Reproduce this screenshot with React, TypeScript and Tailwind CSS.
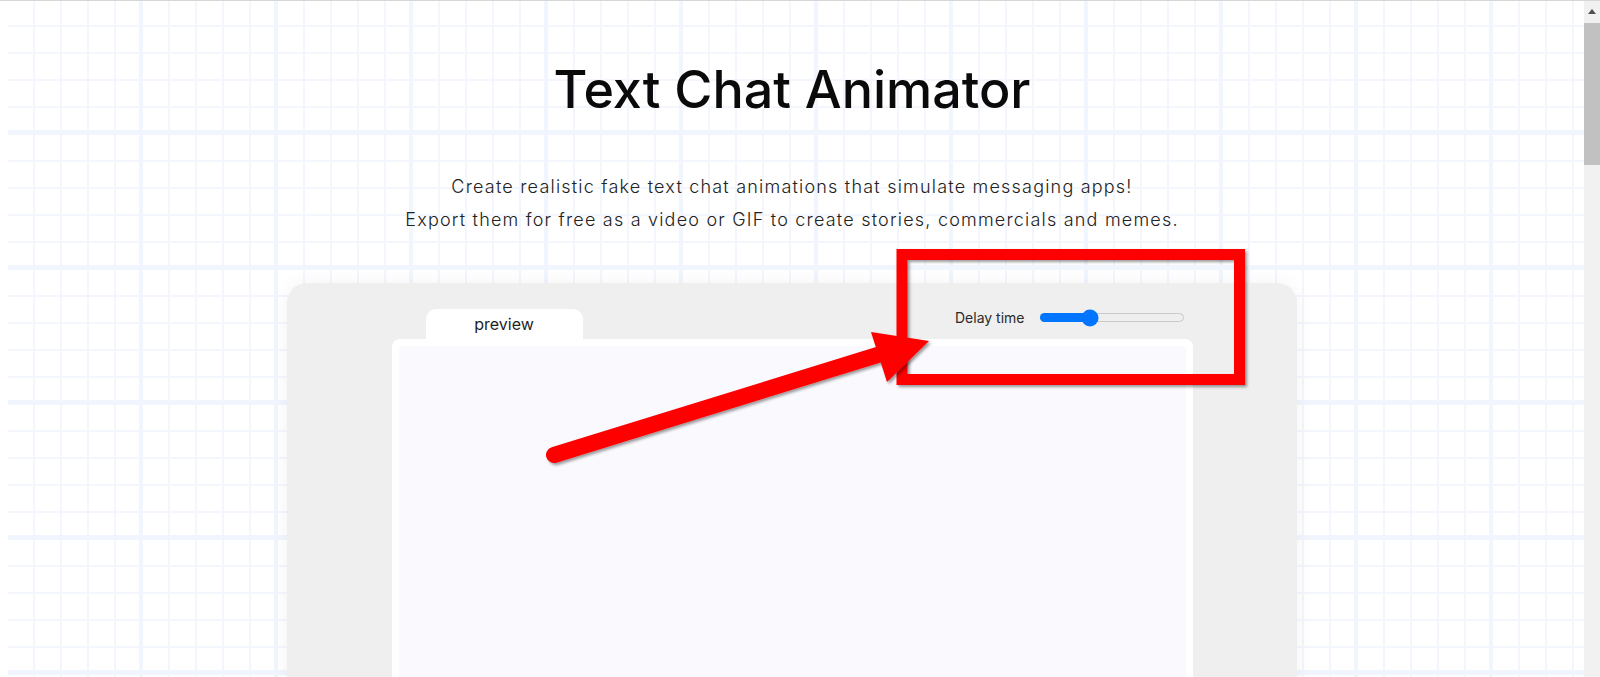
import { useState } from "react";

function DelaySlider() {
  const [value] = useState(35);
  return (
    <div className="flex h-[17px] items-center gap-[15px]">
      <span className="font-['Inter','Liberation_Sans',sans-serif] text-[14px] leading-none text-[#2a2a2a]">
        Delay time
      </span>
      <div className="relative h-[9px] w-[144px] rounded-full border border-[#c9c9c9] bg-[#efefef]">
        <div
          className="absolute -left-px -top-px h-[9px] rounded-full bg-[#0075ff]"
          style={{ width: `${value}%` }}
        />
        <div
          className="absolute top-1/2 h-[17px] w-[17px] -translate-x-1/2 -translate-y-1/2 rounded-full bg-[#0075ff]"
          style={{ left: `${value}%` }}
        />
      </div>
    </div>
  );
}

function Annotation() {
  return (
    <svg
      className="pointer-events-none absolute left-0 top-0"
      width="1600"
      height="677"
      viewBox="0 0 1600 677"
    >
      <defs>
        <filter id="shade" x="-10%" y="-10%" width="130%" height="130%">
          <feDropShadow dx="2" dy="2" stdDeviation="1.5" floodColor="#000" floodOpacity="0.4" />
        </filter>
      </defs>
      <rect
        x="902"
        y="253.5"
        width="337.5"
        height="125"
        fill="none"
        stroke="#ff0000"
        strokeWidth="11"
        filter="url(#shade)"
      />
      <g filter="url(#shade)">
        <line x1="554" y1="454" x2="884" y2="352" stroke="#ff0000" strokeWidth="16" strokeLinecap="round" />
        <polygon points="871,331 929,340 887,381" fill="#ff0000" />
      </g>
    </svg>
  );
}

export default function App() {
  return (
    <div className="relative flex h-[677px] w-full overflow-hidden border-t border-[#d6d6d6] bg-white">
      <main className="relative min-w-0 flex-1 overflow-hidden bg-[image:linear-gradient(to_right,#fff_8px,transparent_8px),linear-gradient(to_right,transparent_131px,#f1f5fd_131px,#f1f5fd_135px),linear-gradient(to_bottom,transparent_130px,#f1f5fd_130px,#f1f5fd_135px),linear-gradient(to_right,transparent_25px,#f3f6fd_25px,#f3f6fd_27px),linear-gradient(to_bottom,transparent_25px,#f3f6fd_25px,#f3f6fd_27px)] bg-[size:100%_100%,135px_100%,100%_135px,27px_100%,100%_27px] bg-[position:0_0,8px_0,0_-1px,8px_0,0_-1px]">
        <h1 className="pt-[63px] text-center font-['Inter','Liberation_Sans',sans-serif] text-[52px] font-medium leading-[52px] tracking-[0px] text-[#0a0a0a]">
          Text Chat Animator
        </h1>
        <div className="mt-[54px] text-center font-['Inter','Liberation_Sans',sans-serif] text-[18px] font-light leading-[33px] tracking-[1.2px] text-[#222]">
          <p>Create realistic fake text chat animations that simulate messaging apps!</p>
          <p>Export them for free as a video or GIF to create stories, commercials and memes.</p>
        </div>
        <section className="mx-auto mt-[47px] h-[500px] w-[1010px] rounded-[20px] bg-[#efefef] pt-[26px] shadow-[0_0_18px_rgba(0,0,0,0.05)]">
          <div className="mx-auto w-[801px]">
            <div className="flex items-start justify-between">
              <div className="ml-[34px] flex h-[30px] w-[157px] items-center justify-center rounded-t-[10px] bg-white font-['Inter','Liberation_Sans',sans-serif] text-[16px] text-[#1f1f1f]">
                preview
              </div>
              <div className="mr-[9px]">
                <DelaySlider />
              </div>
            </div>
            <div className="h-[400px] rounded-[8px] bg-white p-[7px]">
              <div className="h-full rounded-[3px] bg-[#f9f9fe]" />
            </div>
          </div>
        </section>
      </main>
      <aside className="flex w-[16px] flex-col bg-[#f1f1f1]">
        <div className="flex h-[20px] items-center justify-center">
          <svg width="8" height="5" viewBox="0 0 8 5">
            <polygon points="0,5 4,0 8,5" fill="#505050" />
          </svg>
        </div>
        <div className="mt-[2px] h-[142px] w-full bg-[#c1c1c1]" />
      </aside>
      <Annotation />
    </div>
  );
}
